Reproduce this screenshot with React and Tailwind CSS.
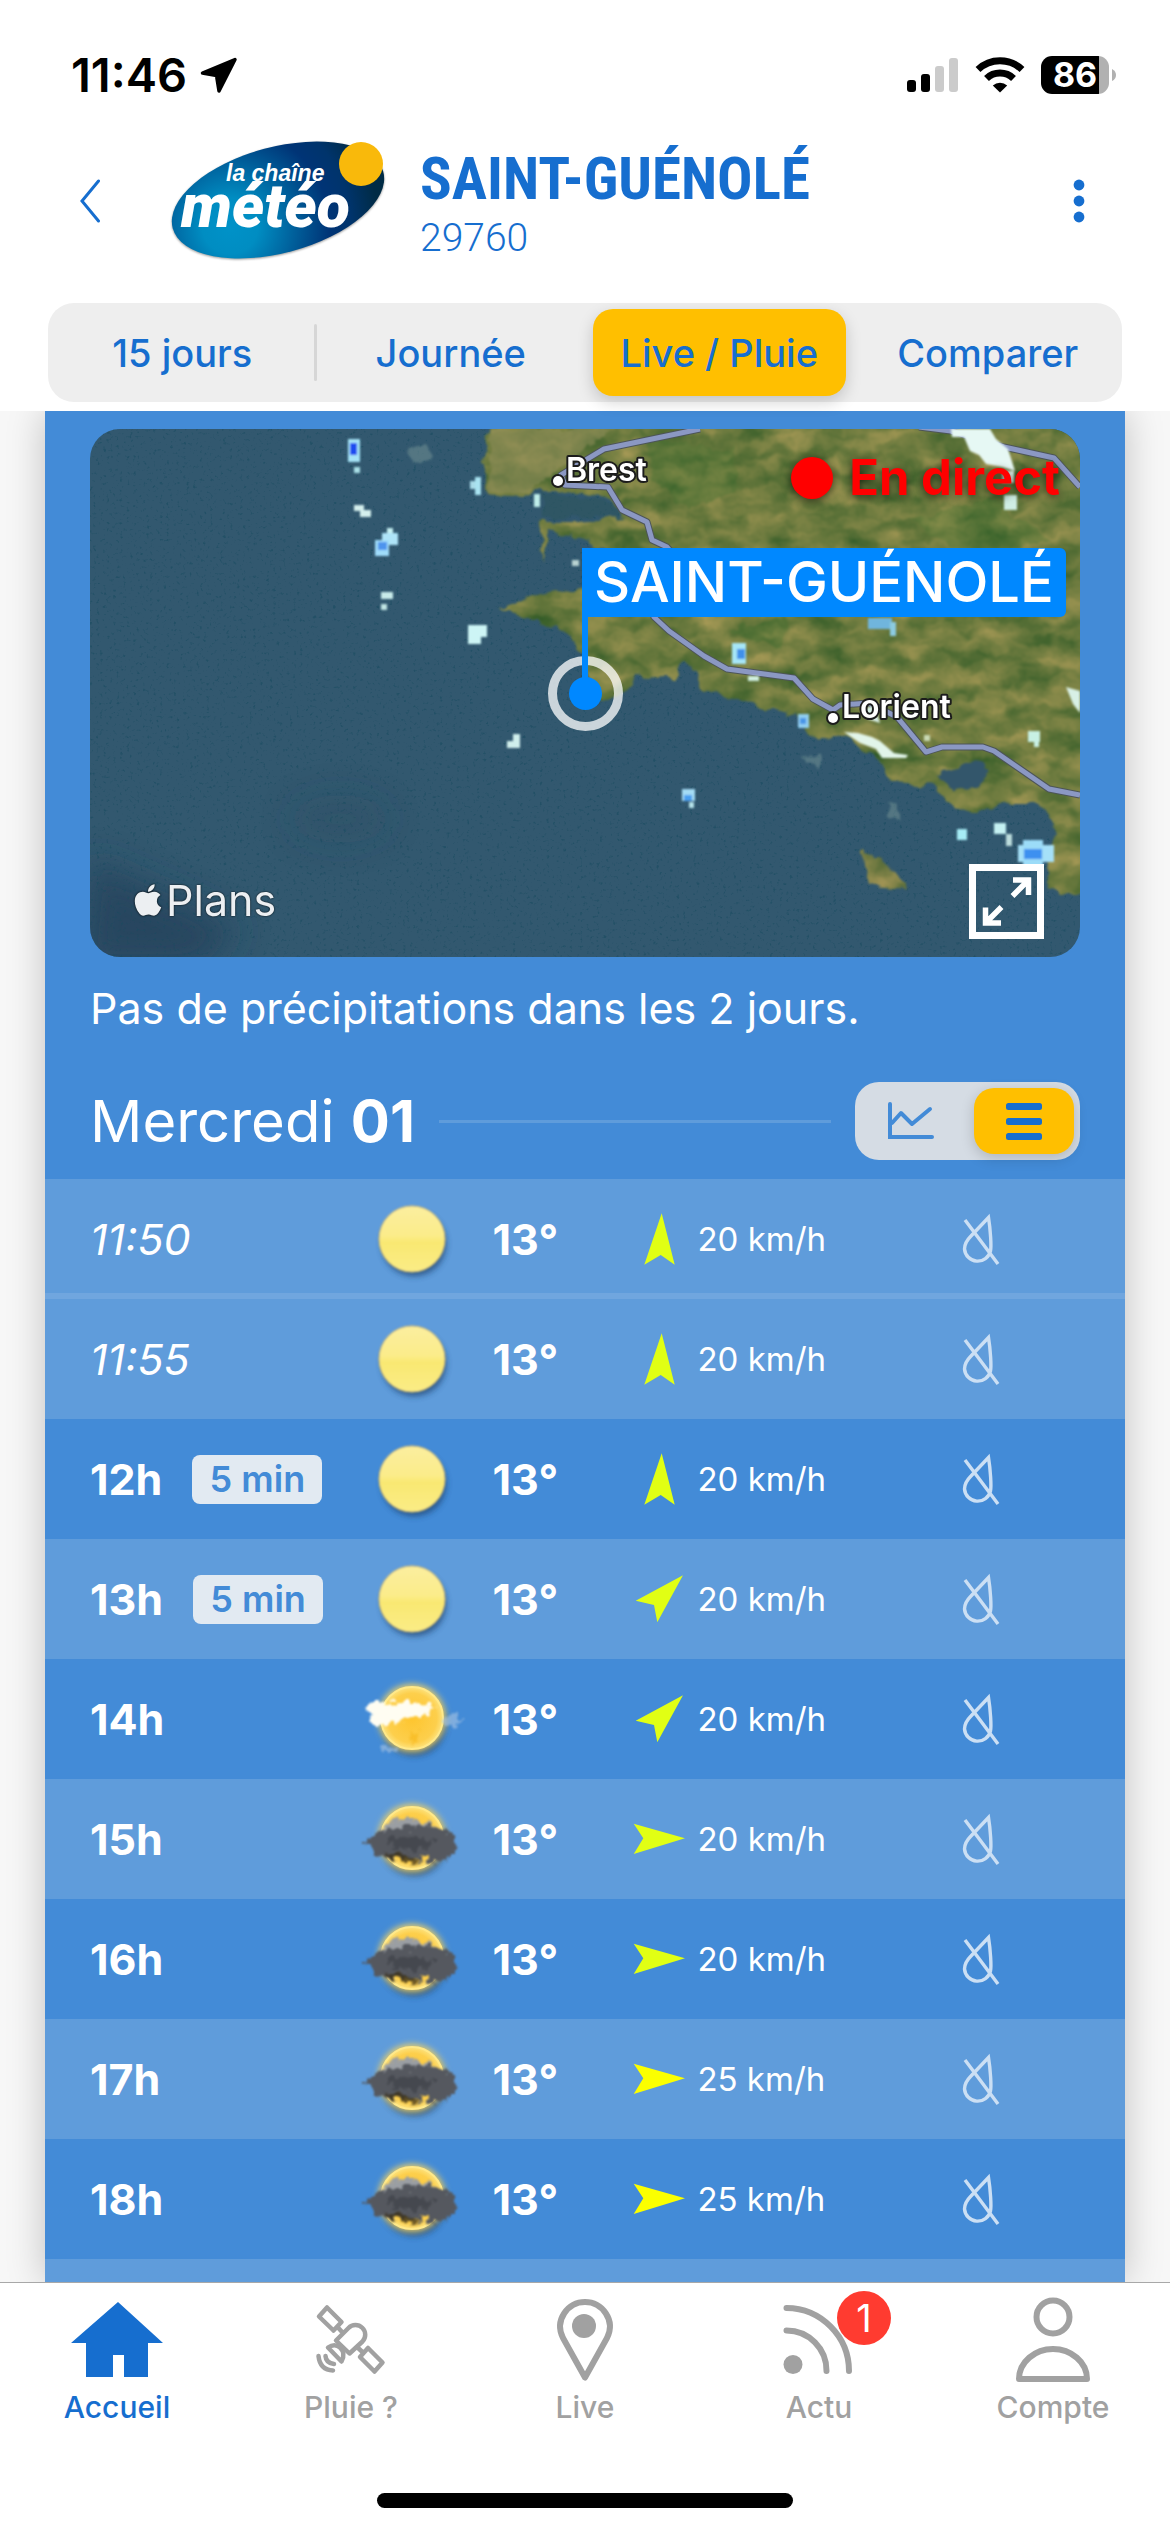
// src/App.jsx
import { useState } from 'react';
import { FaApple } from 'react-icons/fa';

const tabs = ['15 jours', 'Journée', 'Live / Pluie', 'Comparer'];

const hours = [
  { time: '11:50', live: true, sky: 'sun', temp: 13, wind: 20, dir: 'n', light: true },
  { time: '11:55', live: true, sky: 'sun', temp: 13, wind: 20, dir: 'n', light: true },
  { time: '12h', step: '5 min', sky: 'sun', temp: 13, wind: 20, dir: 'n' },
  { time: '13h', step: '5 min', sky: 'sun', temp: 13, wind: 20, dir: 'ne', light: true },
  { time: '14h', sky: 'veiled', temp: 13, wind: 20, dir: 'ne' },
  { time: '15h', sky: 'cloudy', temp: 13, wind: 20, dir: 'e', light: true },
  { time: '16h', sky: 'cloudy', temp: 13, wind: 20, dir: 'e' },
  { time: '17h', sky: 'cloudy', temp: 13, wind: 25, dir: 'e', light: true },
  { time: '18h', sky: 'cloudy', temp: 13, wind: 25, dir: 'e' },
];

const arrows = {
  n: '28.7,1.3 41.7,52.7 27.7,43 11.3,52.7',
  ne: '50,3.3 24.3,50.3 21,33 2.7,28.7',
  e: '52,26.3 0.7,11.7 10.3,26.3 0.7,42',
};

const StatusBar = () => (
  <div className="flex items-center justify-between pl-[71px] pr-[54px] pt-[50px] text-black">
    <div className="flex items-center gap-3">
      <span className="text-[47px] leading-[50px] font-semibold">11:46</span>
      <svg className="h-[38px] w-[40px]" viewBox="0 0 40 38">
        <path
          d="M36 3.5 3.5 17 17.5 19.5 20 35Z"
          fill="#000"
          stroke="#000"
          strokeWidth="3.5"
          strokeLinejoin="round"
        />
      </svg>
    </div>
    <div className="flex items-center">
      <svg className="mr-4 h-[38px] w-[52px]" viewBox="0 0 52 38">
        <rect x="0" y="24" width="9" height="12" rx="3" />
        <rect x="14" y="18" width="9" height="18" rx="3" />
        <rect x="28" y="10" width="9" height="26" rx="3" fill="#cbcbcb" />
        <rect x="42" y="2" width="9" height="34" rx="3" fill="#cbcbcb" />
      </svg>
      <svg className="mr-4 h-[38px] w-[50px]" viewBox="0 0 50 38">
        <g fill="none" stroke="#000" strokeWidth="7">
          <path d="M3 13.5A32 32 0 0 1 47 13.5" />
          <path d="M11.5 22.5A19.5 19.5 0 0 1 38.5 22.5" />
        </g>
        <path d="M25 36.5 17.8 29.5A10.5 10.5 0 0 1 32.2 29.5Z" />
      </svg>
      <div className="flex h-[38px] w-[68px] items-center justify-center rounded-[11px] bg-[linear-gradient(90deg,#000_85%,#b1b1b1_85%)] text-[34px] leading-[38px] font-bold text-white">
        86
      </div>
      <svg className="ml-[3px] h-3 w-1" viewBox="0 0 4 12">
        <path d="M0 0Q4 2 4 6T0 12Z" fill="#b1b1b1" />
      </svg>
    </div>
  </div>
);

const Logo = () => (
  <svg className="h-[126px] w-[220px]" viewBox="0 0 220 126" role="img" aria-label="la chaîne météo">
    <defs>
      <radialGradient id="logoFill" gradientUnits="userSpaceOnUse" cx="-53" cy="13" r="155">
        <stop offset="0" stopColor="#0092c8" />
        <stop offset="0.18" stopColor="#008dc2" />
        <stop offset="0.64" stopColor="#003476" />
        <stop offset="0.78" stopColor="#00346c" />
        <stop offset="0.96" stopColor="#002b45" />
      </radialGradient>
    </defs>
    <g className="drop-shadow-[0_1px_1px_#0006]">
      <ellipse cx="0" cy="0" rx="109" ry="53" fill="url(#logoFill)" transform="translate(110 62) rotate(-15)" />
    </g>
    <circle cx="193" cy="26" r="22" fill="#f9b90b" />
    <g fill="#fff" fontStyle="italic">
      <text x="58" y="43" fontSize="23" fontWeight="700" fontFamily="Liberation Sans, sans-serif">
        la chaîne
      </text>
      <text x="13" y="89" fontSize="61" fontWeight="900" fontFamily="Roboto, sans-serif">
        météo
      </text>
    </g>
  </svg>
);

const Header = () => (
  <header className="flex items-center pl-[68px] pr-[60px] pt-9">
    <button type="button" aria-label="Retour" className="flex h-[60px] w-[44px] items-center justify-center">
      <svg className="h-[44px] w-[22px]" viewBox="0 0 22 44">
        <path d="M19.5 2 3 22l16.5 20" fill="none" stroke="#166ecf" strokeWidth="3" strokeLinecap="round" />
      </svg>
    </button>
    <a href="#accueil" className="ml-14">
      <Logo />
    </a>
    <div className="ml-8 flex-1 pt-3 text-[#166ecf]">
      <h1 className="font-['Roboto_Condensed','Liberation_Sans_Narrow',sans-serif] text-[59px] leading-[62px] font-bold">
        SAINT-GUÉNOLÉ
      </h1>
      <p className="font-['Roboto',sans-serif] text-[39px] leading-[56px] font-light">29760</p>
    </div>
    <button type="button" aria-label="Menu" className="flex h-[60px] w-[62px] items-center justify-center">
      <svg className="h-[44px] w-[12px]" viewBox="0 0 12 44" fill="#166ecf">
        <circle cx="6" cy="6" r="5.4" />
        <circle cx="6" cy="22" r="5.4" />
        <circle cx="6" cy="38" r="5.4" />
      </svg>
    </button>
  </header>
);

const TabBar = ({ active, onSelect }) => (
  <div className="mx-12 mt-[37px] mb-[9px] grid h-[99px] grid-cols-4 rounded-[26px] bg-[#eeeeee] py-[6px]">
    {tabs.map((tab, i) => (
      <div key={tab} className="relative flex px-2">
        {i === 0 && <span className="absolute top-[15px] right-0 h-[57px] w-[3px] rounded bg-[#d6d6d6]" />}
        <button
          type="button"
          onClick={() => onSelect(tab)}
          className={`flex-1 rounded-[20px] text-[38px] leading-[48px] font-medium whitespace-nowrap text-[#166ecf] ${
            active === tab ? 'bg-[#ffbf00] shadow-[0_6px_16px_#0000002e]' : ''
          }`}
        >
          {tab}
        </button>
      </div>
    ))}
  </div>
);

// x, y, width, height, colour
const echoes = [
  [258, 10, 12, 23, '#a5e3f7'],
  [260, 14, 7, 12, '#1a4cf0'],
  [264, 38, 6, 6, '#a9dfe6'],
  [264, 76, 10, 6, '#d4efed'],
  [270, 81, 11, 7, '#d4efed'],
  [297, 99, 6, 12, '#c5f0f2'],
  [292, 104, 16, 12, '#aee4f8'],
  [285, 111, 14, 16, '#9fdcfa'],
  [288, 113, 9, 8, '#4d94ee'],
  [291, 163, 12, 7, '#c8ebe9'],
  [291, 175, 6, 6, '#c0e4e2'],
  [378, 196, 19, 12, '#cdf5f5'],
  [378, 208, 13, 7, '#cdf5f5'],
  [380, 52, 6, 8, '#a9dbe8'],
  [385, 48, 6, 18, '#a9e3f1'],
  [444, 65, 6, 13, '#bfeee9'],
  [482, 131, 7, 6, '#b8d3d2'],
  [423, 305, 7, 8, '#d0efec'],
  [417, 312, 13, 7, '#d0efec'],
  [642, 214, 14, 21, '#a6e6f7'],
  [647, 220, 8, 10, '#3f90ea'],
  [658, 247, 11, 5, '#d0efe0'],
  [778, 189, 24, 11, '#6fb5dd'],
  [800, 193, 6, 14, '#8ccbe0'],
  [708, 285, 11, 14, '#90cdf0'],
  [710, 289, 6, 6, '#4a95e6'],
  [592, 360, 13, 12, '#a4dcf5'],
  [594, 366, 8, 6, '#4a9ff0'],
  [599, 373, 5, 6, '#b5e2ea'],
  [867, 400, 10, 11, '#a6ecf5'],
  [904, 394, 12, 11, '#c5f1f2'],
  [916, 405, 6, 12, '#bcdcdc'],
  [928, 416, 36, 17, '#a5e0f8'],
  [933, 411, 20, 26, '#9cdcf8'],
  [934, 420, 18, 10, '#3d90f0'],
  [938, 302, 12, 11, '#c8f0e4'],
  [944, 312, 5, 6, '#c8f0e4'],
  [834, 306, 6, 6, '#c9d9b4'],
  [914, 66, 13, 15, '#cfeee4'],
  [912, 42, 12, 12, '#e4f7f0'],
];

const MapArt = () => (
  <svg className="block h-[528px] w-full" viewBox="0 0 990 528" preserveAspectRatio="xMidYMid slice">
    <defs>
      <filter id="relief" x="0" y="0" width="100%" height="100%" colorInterpolationFilters="sRGB">
        <feTurbulence type="fractalNoise" baseFrequency="0.025 0.05" numOctaves="6" seed="8" />
        <feColorMatrix values="0.75 0 0 0 0.06  0.4 0 0 0 0.28  0.3 0 0 0 0.1  0 0 0 0 0.75" />
        <feComposite in2="SourceGraphic" operator="in" result="noise" />
        <feMerge>
          <feMergeNode in="SourceGraphic" />
          <feMergeNode in="noise" />
        </feMerge>
      </filter>
      <filter id="coast" x="-2%" y="-2%" width="104%" height="104%" colorInterpolationFilters="sRGB">
        <feTurbulence type="fractalNoise" baseFrequency="0.06" numOctaves="3" seed="3" />
        <feDisplacementMap in="SourceGraphic" scale="14" xChannelSelector="R" yChannelSelector="G" />
        <feGaussianBlur stdDeviation="1.2" />
      </filter>
      <filter id="swell" x="0" y="0" width="100%" height="100%" colorInterpolationFilters="sRGB">
        <feTurbulence type="fractalNoise" baseFrequency="0.3" numOctaves="2" seed="5" />
        <feColorMatrix values="0 0 0 0 0.1  0 0 0 0 0.3  0 0 0 0 0.38  0 0 5 0 -3.1" />
      </filter>
      <filter id="soft" x="-5%" y="-5%" width="110%" height="110%">
        <feGaussianBlur stdDeviation="1" />
      </filter>
      <filter id="haze" x="-50%" y="-50%" width="200%" height="200%">
        <feGaussianBlur stdDeviation="16" />
      </filter>
    </defs>
    <rect width="990" height="528" fill="#32586f" />
    <g filter="url(#haze)" fill="#23405a">
      <path d="M0 430 90 470 150 500 110 540H-10Z" opacity="0.7" />
      <ellipse cx="250" cy="390" rx="50" ry="24" opacity="0.2" />
    </g>
    <rect width="990" height="528" filter="url(#swell)" opacity="0.6" />
    <g filter="url(#coast)">
      <g filter="url(#relief)">
        <path
          fill="#687d3c"
          d="M402-8 394 35 397 65 433 68 451 61 468 61 518 70 536 88 486 92 449 92 454 131 461 102 490 110 520 125 520 152 489 160 433 168 411 179 451 195 469 199 490 220 497 245 513 274 523 272 546 256 543 245 587 251 593 236 604 236 616 263 657 274 704 285 718 304 754 308 786 327 800 352 836 356 882 385 914 374 950 374 964 395 957 456 975 467 1000 461V-8Z"
        />
        <path fill="#8a8550" d="M774 424 795 434 806 450 818 458 814 460 777 456Z" />
      </g>
      <path fill="#33566b" d="M846 346 872 336 890 330 900 342 884 360 862 362Z" />
      <path fill="#2d5560" d="M452 62 520 74 534 88 500 86 452 90Z" opacity="0.7" />
      <path fill="#9a9460" opacity="0.5" d="M402 0H520L470 40 440 64 398 62Z" />
      <path fill="#2f6a2c" opacity="0.25" d="M560 10 640 20 650 60 600 80 560 50ZM640 200 700 190 690 220ZM820 90 900 70 960 110 880 130Z" />
      <path fill="#6a8a90" opacity="0.6" d="M708 325 730 330 732 338 716 334ZM796 372 804 374 812 390 800 388ZM320 22 338 14 342 28 326 36Z" />
    </g>
    <g fill="none" strokeLinejoin="round">
      {['#4d5558', '#8b98c3'].map((color, i) => (
        <path
          key={color}
          stroke={color}
          strokeWidth={i === 0 ? 7 : 5}
          d="M610 0 514 20 471 46 475 56 518 58 532 81 557 93 562 111 577 118 600 145 564 188 579 202 614 227 637 240 704 249 723 270 743 281 750 276 779 274 807 288 836 323 852 318H893L904 322 959 360 990 366M829-2 861 2 914 18 964 29 990 58"
        />
      ))}
    </g>
    <g filter="url(#soft)">
      <path fill="#e6f8f4" d="M861 0H900L906 10 918 20 925 42 912 38 896 35 889 26 880 22 874 8 862 8Z" />
      <path fill="#e2f5ea" d="M754 303 768 304 782 308 790 312 804 324 818 326 816 329 792 329 786 320 770 314Z" />
      <path fill="#d8f0e6" d="M976 258 990 262V284L983 275ZM774 280 784 276 790 294 778 290Z" />
      {echoes.map(([x, y, w, h, fill]) => (
        <rect key={`${x}-${y}`} x={x} y={y} width={w} height={h} fill={fill} />
      ))}
    </g>
    <g
      fill="#fff"
      stroke="#1c1c1c"
      strokeWidth="4"
      paintOrder="stroke"
      strokeLinejoin="round"
      fontFamily="Inter, sans-serif"
      fontWeight="600"
      fontSize="32"
    >
      <circle cx="468" cy="52" r="5" />
      <text x="476" y="52">Brest</text>
      <circle cx="743" cy="289" r="5" />
      <text x="752" y="289">Lorient</text>
    </g>
  </svg>
);

const LiveMap = () => (
  <div className="relative overflow-hidden rounded-[30px]">
    <MapArt />
    {/* pin, anchored on the centre of the map */}
    <div className="absolute top-1/2 left-1/2 -ml-[37px] -mt-[37px] size-[75px] rounded-full border-[9px] border-white/75" />
    <div className="absolute top-1/2 left-1/2 -ml-4 -mt-4 size-[33px] rounded-full bg-[#0088ff]" />
    <div className="absolute bottom-1/2 left-1/2 -ml-[3px] flex h-[145px] flex-col items-start">
      <p className="rounded-r-[6px] bg-[#0088ff] px-3 text-[56px] leading-[69px] font-medium whitespace-nowrap text-white">
        SAINT-GUÉNOLÉ
      </p>
      <span className="w-[6px] flex-1 bg-[#0088ff]" />
    </div>
    <div className="absolute top-[22px] right-5 flex items-center gap-4 text-[#ff0000]">
      <span className="size-[42px] rounded-full bg-[#ff0000] shadow-[0_2px_10px_#0009]" />
      <span className="text-[49px] leading-[54px] font-bold text-shadow-[0_2px_8px_#0009]">En direct</span>
    </div>
    <div className="absolute bottom-[30px] left-[40px] flex items-center text-[#eceff2]">
      <FaApple className="size-9 drop-shadow-[0_0_1px_#000]" />
      <span className="text-[43px] leading-[54px] text-shadow-[0_0_2px_#000]">Plans</span>
    </div>
    <button type="button" aria-label="Plein écran" className="absolute right-[36px] bottom-[18px]">
      <svg className="size-[75px]" viewBox="0 0 75 75" fill="none" stroke="#fff">
        <rect x="3.5" y="3.5" width="68" height="68" strokeWidth="7" />
        <path d="M44 16H59.5V31M58 17.5 43.5 32M16.5 43.5V59H32M18 57.5 32.5 43" strokeWidth="5.5" />
      </svg>
    </button>
  </div>
);

const ViewToggle = ({ view, onChange }) => (
  <div className="flex h-[78px] w-[225px] rounded-[24px] bg-[#d5dce4] p-[6px]">
    <button
      type="button"
      aria-label="Graphique"
      onClick={() => onChange('chart')}
      className={`flex w-[100px] items-center justify-center rounded-[20px] ${
        view === 'chart' ? 'bg-[#ffbf00] shadow-[0_4px_14px_#0000002e]' : ''
      }`}
    >
      <svg className="h-[38px] w-[46px]" viewBox="0 0 46 38" fill="none" stroke="#438bd7" strokeLinecap="round">
        <path d="M2 2V35H44" strokeWidth="4" />
        <path d="M4 21 13 11 24 22 42 7" strokeWidth="4" strokeLinejoin="round" />
      </svg>
    </button>
    <button
      type="button"
      aria-label="Liste"
      onClick={() => onChange('list')}
      className={`ml-auto flex w-[100px] items-center justify-center rounded-[20px] ${
        view === 'list' ? 'bg-[#ffbf00] shadow-[0_4px_14px_#0000002e]' : ''
      }`}
    >
      <svg className="h-[37px] w-[36px]" viewBox="0 0 36 37" fill="#166ecf">
        <rect width="36" height="7" rx="2.5" />
        <rect y="15" width="36" height="7" rx="2.5" />
        <rect y="30" width="36" height="7" rx="2.5" />
      </svg>
    </button>
  </div>
);

// gradients and filters shared by every sky icon
const SkyDefs = () => (
  <svg className="absolute size-0" aria-hidden="true">
    <defs>
      <linearGradient id="paleSun" x2="0" y2="1">
        <stop offset="0" stopColor="#fcee9f" />
        <stop offset="0.45" stopColor="#fbec8a" />
        <stop offset="0.55" stopColor="#f9e872" />
        <stop offset="1" stopColor="#faec86" />
      </linearGradient>
      <radialGradient id="warmSun">
        <stop offset="0" stopColor="#fec52e" />
        <stop offset="0.8" stopColor="#fdcf4c" />
        <stop offset="1" stopColor="#fde27c" />
      </radialGradient>
      <filter id="blur1" x="-40%" y="-40%" width="180%" height="180%">
        <feGaussianBlur stdDeviation="1.2" />
      </filter>
      <filter id="blur3" x="-40%" y="-40%" width="180%" height="180%">
        <feGaussianBlur stdDeviation="3" />
      </filter>
      <filter id="puff" x="-20%" y="-20%" width="140%" height="140%" colorInterpolationFilters="sRGB">
        <feTurbulence type="fractalNoise" baseFrequency="0.13" numOctaves="4" seed="4" />
        <feDisplacementMap in="SourceGraphic" scale="16" xChannelSelector="R" yChannelSelector="G" />
        <feGaussianBlur stdDeviation="0.9" />
      </filter>
    </defs>
  </svg>
);

const SkyIcon = ({ sky }) => (
  <svg className="mx-auto block size-[110px]" viewBox="0 0 110 110">
    <circle cx="57" cy="60" r="32" fill="#1d3f6c" opacity="0.75" filter="url(#blur3)" />
    {sky === 'sun' ? (
      <circle cx="55" cy="55" r="33" fill="url(#paleSun)" stroke="#d9bd72" filter="url(#blur1)" />
    ) : (
      <>
        <circle cx="55" cy="54" r="34" fill="#e8cf6a" filter="url(#blur3)" />
        <circle cx="55" cy="54" r="31" fill="url(#warmSun)" stroke="#ffe98a" strokeWidth="2" />
      </>
    )}
    {sky === 'veiled' && (
      <g filter="url(#puff)">
        <path fill="#fffdf2" d="M10 42C17 36 34 39 46 38 58 40 68 40 76 44 72 50 62 53 54 53 46 56 40 62 30 62 20 62 8 54 10 42Z" />
        <path fill="#f7b91f" opacity="0.7" d="M54 66 62 70 58 80 52 76Z" />
        <path fill="#a9c4e2" opacity="0.6" d="M88 54 98 49 106 56 96 62 88 60ZM22 86 36 82 40 88 26 90Z" />
      </g>
    )}
    {sky === 'cloudy' && (
      <g filter="url(#puff)">
        <path fill="#9a9ea3" d="M18 52C28 38 40 31 52 34 62 34 72 42 86 48L60 60 24 60Z" />
        <path fill="#55585f" d="M8 58C20 46 34 42 48 44 62 40 80 44 90 47 102 55 101 70 90 76 78 80 68 75 56 74 44 77 28 76 18 70Z" />
        <path fill="#3a3d44" opacity="0.6" d="M30 56C44 50 62 54 76 56L72 66C58 66 44 65 32 62Z" />
        <path fill="#3a2f18" opacity="0.8" d="M26 69 46 70 64 77 52 80 36 75Z" />
      </g>
    )}
  </svg>
);

const HourRow = ({ row, separated }) => (
  <tr
    className={`h-[120px] ${row.light ? 'bg-[#5f9cdb]' : ''} ${
      separated ? 'shadow-[inset_0_-6px_0_#70a6df]' : ''
    }`}
  >
    <th scope="row" className="pl-[45px] text-left font-normal">
      <div className="flex items-center gap-[30px]">
        <span className={row.live ? 'text-[43px] leading-[50px] italic' : 'text-[43px] leading-[50px] font-bold'}>
          {row.time}
        </span>
        {row.step && (
          <span className="w-[130px] rounded-[8px] bg-[#e2eaf2] text-center text-[36px] leading-[49px] font-semibold text-[#438bd7]">
            {row.step}
          </span>
        )}
      </div>
    </th>
    <td>
      <SkyIcon sky={row.sky} />
    </td>
    <td className="pl-[10px] text-[43px] leading-[50px] font-bold">{row.temp}°</td>
    <td className="pl-4">
      <div className="flex items-center gap-[10px]">
        <svg className="size-[54px]" viewBox="0 0 54 54">
          <polygon points={arrows[row.dir]} fill={row.wind > 20 ? '#fbff00' : '#e1ff14'} />
        </svg>
        <span className="text-[33px] leading-[48px]">{row.wind} km/h</span>
      </div>
    </td>
    <td className="pl-1">
      <svg className="h-[54px] w-[38px]" viewBox="0 0 38 54" fill="none" stroke="#cbdff4" strokeWidth="3.4">
        <path d="M26.5 5.5 9 24C4 29 2.5 33 2.5 37A13.2 13.2 0 0 0 28.5 39C29.5 34 28.5 18 26.5 5.5ZM3 8 36 52" />
      </svg>
    </td>
  </tr>
);

const navItems = [
  {
    label: 'Accueil',
    icon: <path d="M49 7 94 48H79V82H55V60H44V82H17V48H2Z" fill="currentColor" stroke="none" />,
  },
  {
    label: 'Pluie ?',
    icon: (
      <g strokeWidth="4.5">
        <path d="M24 12.5 38.5 27 30.5 35.5 16 21.5ZM65 53 79.5 67.5 71.5 76.5 57 62ZM45.5 33 33 45.5 46.5 58.5 59.5 46.5A9.5 9.5 0 0 0 45.5 33ZM34.5 32 39.5 37.5M54 52 60.5 58" />
        <path d="M25 52.5 38.5 66.5Q43 58 37 52.5 31.5 48 25 52.5ZM22.5 61Q23 68 31 69M15.5 61Q17 75 30 75.5" />
      </g>
    ),
  },
  {
    label: 'Live',
    icon: (
      <>
        <path d="M48 82.5 26 43C17 25 31 7 48 7 65 7 79 25 70 43Z" />
        <circle cx="47" cy="31" r="12" fill="currentColor" stroke="none" />
      </>
    ),
  },
  {
    label: 'Actu',
    badge: 1,
    icon: (
      <>
        <path d="M15.5 13A63 63 0 0 1 78 76M15.5 35.5A40 40 0 0 1 55.5 76" />
        <circle cx="22" cy="69.5" r="9.5" fill="currentColor" stroke="none" />
      </>
    ),
  },
  {
    label: 'Compte',
    icon: (
      <>
        <circle cx="48" cy="22" r="16.5" />
        <path d="M14 84C14 67 30 54 48 54 66 54 82 67 82 84Z" />
      </>
    ),
  },
];

const BottomNav = () => (
  <footer className="border-t border-[#a8a8a8] bg-white">
    <nav className="grid grid-cols-5 pt-3">
      {navItems.map(({ label, icon, badge }, i) => (
        <a
          key={label}
          href={`#${label.toLowerCase()}`}
          className={`flex flex-col items-center ${i === 0 ? 'text-[#166ecf]' : 'text-[#a1a1a1]'}`}
        >
          <span className="relative">
            <svg
              className="h-[90px] w-[96px]"
              viewBox="0 0 96 90"
              fill="none"
              stroke="currentColor"
              strokeWidth="6"
              strokeLinecap="round"
              strokeLinejoin="round"
            >
              {icon}
            </svg>
            {badge && (
              <span className="absolute -top-1 left-[66px] size-[54px] rounded-full bg-[#ff3b30] text-center text-[38px] leading-[54px] text-white">
                {badge}
              </span>
            )}
          </span>
          <span className="mt-1 text-[30px] leading-[36px] font-medium">{label}</span>
        </a>
      ))}
    </nav>
    <div className="mx-auto mt-[68px] mb-6 h-[15px] w-[416px] rounded-full bg-black" />
  </footer>
);

const App = () => {
  const [tab, setTab] = useState('Live / Pluie');
  const [view, setView] = useState('list');

  return (
    <div className="flex h-screen flex-col bg-white font-['Inter',sans-serif]">
      <StatusBar />
      <Header />
      <TabBar active={tab} onSelect={setTab} />

      <main className="flex min-h-0 flex-1 flex-col overflow-hidden bg-[#f7f7f7] px-[45px]">
        <SkyDefs />
        <section className="flex min-h-0 flex-1 flex-col bg-[#438bd7] pt-[18px] text-white shadow-[0_0_36px_#00000038]">
          <div className="px-[45px]">
            <LiveMap />
            <p className="mt-6 text-[43px] leading-[54px]">Pas de précipitations dans les 2 jours.</p>
            <div className="mt-[47px] mb-[19px] flex items-center">
              <h2 className="text-[58px] leading-[72px]">
                Mercredi <span className="font-bold">01</span>
              </h2>
              <div className="mx-6 h-[3px] flex-1 bg-[#5f9cdb]" />
              <ViewToggle view={view} onChange={setView} />
            </div>
          </div>

          <table className="w-full shrink-0 table-fixed">
            <colgroup>
              <col className="w-[27.5%]" />
              <col className="w-[13%]" />
              <col className="w-[12.5%]" />
              <col className="w-[31.5%]" />
              <col />
            </colgroup>
            <tbody>
              {hours.map((row, i) => (
                <HourRow key={row.time} row={row} separated={i === 0} />
              ))}
            </tbody>
          </table>
          <div className="flex-1 bg-[#5f9cdb]" />
        </section>
      </main>

      <BottomNav />
    </div>
  );
};

export default App;
